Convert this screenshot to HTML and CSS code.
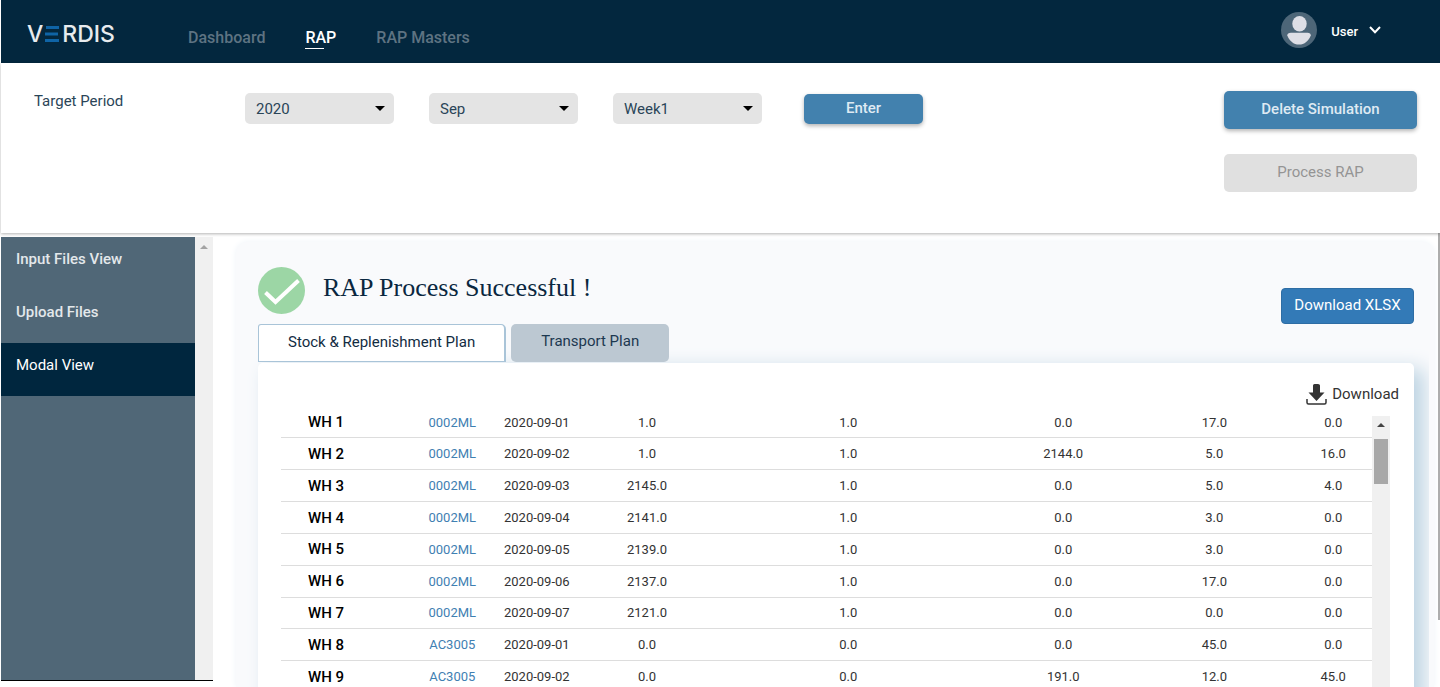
FILE: index.html
```html
<!DOCTYPE html>
<html lang="en">
<head>
    <meta charset="UTF-8">
    <meta name="viewport" content="width=device-width, initial-scale=1.0">
    <title>Verdis - RAP</title>
    <link rel="stylesheet" href="styles.css">
</head>
<body>
    <header class="topbar">
        <a class="logo" href="#" aria-label="Verdis">
            <span>V</span>
            <svg class="logo-bars" width="14" height="16" viewBox="0 0 14 16">
                <path d="M1 1.5h13M0 8h13M0 14.5h14" stroke="#0f64a6" stroke-width="3"/>
            </svg>
            <span>RDIS</span>
        </a>
        <nav class="main-nav">
            <a href="#">Dashboard</a>
            <a href="#" class="active">RAP</a>
            <a href="#">RAP Masters</a>
        </nav>
        <button class="user-menu" type="button">
            <svg width="36" height="36" viewBox="0 0 36 36">
                <circle cx="18" cy="18" r="18" fill="#4d6678"/>
                <ellipse cx="18.5" cy="11.7" rx="7.2" ry="7.8" fill="#dedfe6"/>
                <path d="M6.3 23.5Q6.3 20.8 10 20.8H26.5Q29.8 20.8 29.8 23.5C27.5 29 23.5 32.6 18 32.6S8.5 29 6.3 23.5Z" fill="#dedfe6"/>
            </svg>
            <span>User</span>
            <svg class="chevron" width="12" height="8" viewBox="0 0 12 8">
                <path d="M1 1l5 5.2L11 1" fill="none" stroke="#fff" stroke-width="2"/>
            </svg>
        </button>
    </header>

    <section class="filters">
        <label class="filter-label" for="year">Target Period</label>
        <div class="filter-fields">
            <div class="select"><select id="year" aria-label="Year"><option>2020</option></select></div>
            <div class="select"><select id="month" aria-label="Month"><option>Sep</option></select></div>
            <div class="select"><select id="week" aria-label="Week"><option>Week1</option></select></div>
            <button class="btn btn-enter" type="button">Enter</button>
        </div>
        <div class="filter-actions">
            <button class="btn" type="button">Delete Simulation</button>
            <button class="btn btn-disabled" type="button" disabled>Process RAP</button>
        </div>
    </section>

    <div class="content">
        <aside class="sidebar">
            <nav class="side-nav">
                <a href="#">Input Files View</a>
                <a href="#">Upload Files</a>
                <a href="#" class="active">Modal View</a>
            </nav>
            <div class="side-scroll"><span class="arrow-up"></span></div>
        </aside>

        <main class="panel">
            <div class="results">
                <div class="results-head">
                    <svg width="47" height="47" viewBox="0 0 47 47">
                        <circle cx="23.5" cy="23.5" r="23.5" fill="#9cd6a5"/>
                        <path d="M7.500 25.500l10 9.500L40.500 13.500" fill="none" stroke="#fff" stroke-width="4"/>
                    </svg>
                    <h1>RAP Process Successful !</h1>
                    <button class="btn-xlsx" type="button">Download XLSX</button>
                </div>
                <div class="tabs">
                    <button class="tab active" type="button">Stock &amp; Replenishment Plan</button>
                    <button class="tab" type="button">Transport Plan</button>
                </div>
                <div class="card">
                    <a class="download" href="#">
                        <svg width="21" height="21" viewBox="0 0 21 21">
                            <path d="M7 1.500Q7 0 8.500 0h3.500Q14 0 14 1.500V8.500h4.500L10.500 17L2.500 8.500H7z" fill="#333"/>
                            <path d="M1 15v3.500q0 1.500 1.500 1.500h16q1.500 0 1.500-1.500V15" fill="none" stroke="#333" stroke-width="1.5"/>
                        </svg>
                        Download
                    </a>
                    <div class="table-wrap">
                        <table>
                            <colgroup>
                                <col class="c-wh"><col class="c-code"><col class="c-date"><col class="c-open">
                                <col class="c-min"><col class="c-in"><col class="c-out"><col class="c-end">
                            </colgroup>
                            <tbody>
                                <tr><th>WH 1</th><td><a href="#">0002ML</a></td><td>2020-09-01</td><td>1.0</td><td>1.0</td><td>0.0</td><td>17.0</td><td>0.0</td></tr>
                                <tr><th>WH 2</th><td><a href="#">0002ML</a></td><td>2020-09-02</td><td>1.0</td><td>1.0</td><td>2144.0</td><td>5.0</td><td>16.0</td></tr>
                                <tr><th>WH 3</th><td><a href="#">0002ML</a></td><td>2020-09-03</td><td>2145.0</td><td>1.0</td><td>0.0</td><td>5.0</td><td>4.0</td></tr>
                                <tr><th>WH 4</th><td><a href="#">0002ML</a></td><td>2020-09-04</td><td>2141.0</td><td>1.0</td><td>0.0</td><td>3.0</td><td>0.0</td></tr>
                                <tr><th>WH 5</th><td><a href="#">0002ML</a></td><td>2020-09-05</td><td>2139.0</td><td>1.0</td><td>0.0</td><td>3.0</td><td>0.0</td></tr>
                                <tr><th>WH 6</th><td><a href="#">0002ML</a></td><td>2020-09-06</td><td>2137.0</td><td>1.0</td><td>0.0</td><td>17.0</td><td>0.0</td></tr>
                                <tr><th>WH 7</th><td><a href="#">0002ML</a></td><td>2020-09-07</td><td>2121.0</td><td>1.0</td><td>0.0</td><td>0.0</td><td>0.0</td></tr>
                                <tr><th>WH 8</th><td><a href="#">AC3005</a></td><td>2020-09-01</td><td>0.0</td><td>0.0</td><td>0.0</td><td>45.0</td><td>0.0</td></tr>
                                <tr><th>WH 9</th><td><a href="#">AC3005</a></td><td>2020-09-02</td><td>0.0</td><td>0.0</td><td>191.0</td><td>12.0</td><td>45.0</td></tr>
                            </tbody>
                        </table>
                        <div class="table-scroll">
                            <span class="arrow-up"></span>
                            <span class="thumb"></span>
                        </div>
                    </div>
                </div>
            </div>
        </main>
        <div class="page-scroll"></div>
    </div>
</body>
</html>
```

FILE: styles.css
```css
* {
    box-sizing: border-box;
}

body {
    margin: 0;
    padding-left: 1px;
    height: 100vh;
    display: flex;
    flex-direction: column;
    overflow: hidden;
    background: #fff;
    color: #2a4558;
    font-family: Roboto, Arial, sans-serif;
    font-size: 15px;
}

a {
    text-decoration: none;
}

button,
select {
    font-family: inherit;
    border: none;
}

/* top bar */
.topbar {
    flex: none;
    height: 63px;
    display: flex;
    align-items: center;
    padding: 0 59px 0 26px;
    background: #03273e;
}

.logo {
    display: flex;
    align-items: center;
    width: 161px;
    padding-top: 5px;
    color: #e8ebee;
    font-family: Inter, sans-serif;
    font-size: 23px;
    font-weight: 500;
    line-height: 22px;
}

.logo-bars {
    margin: 0 3px 0 2px;
}

.main-nav {
    flex: 1;
    display: flex;
    gap: 40px;
    padding-top: 12px;
}

.main-nav a {
    color: #5e7382;
    font-size: 16px;
    font-weight: 500;
    line-height: 20px;
}

.main-nav .active {
    color: #fff;
}

.main-nav .active::after {
    content: "";
    display: block;
    width: 19px;
    height: 1px;
    margin-bottom: -1px;
    background: #fff;
}

.user-menu {
    display: flex;
    align-items: center;
    padding: 0;
    margin-bottom: 3px;
    background: none;
    color: #fff;
    font-size: 13px;
    font-weight: 500;
    cursor: pointer;
}

.user-menu span {
    margin: 2px 11px 0 14px;
}

/* filters */
.filters {
    flex: none;
    position: relative;
    z-index: 1;
    display: flex;
    align-items: flex-start;
    height: 170px;
    padding: 28px 23px 0 33px;
    background: #fff;
    box-shadow: 0 1px 3px rgba(0, 0, 0, 0.3);
}

.filter-label {
    width: 211px;
    line-height: 20px;
}

.filter-fields {
    flex: 1;
    display: flex;
    gap: 35px;
    padding-top: 2px;
}

.select {
    position: relative;
    width: 149px;
}

.select::after {
    content: "";
    position: absolute;
    right: 9px;
    top: 13px;
    border: 5px solid transparent;
    border-top-color: #000;
    border-bottom: none;
    pointer-events: none;
}

.select select {
    width: 100%;
    height: 31px;
    padding: 0 11px;
    appearance: none;
    border-radius: 5px;
    background: #e4e4e4;
    color: #2a4558;
    font-size: 15px;
}

.btn {
    height: 38px;
    padding: 0 0 2px;
    border-radius: 5px;
    background: #4281ae;
    color: #dfeaf3;
    font-size: 15px;
    font-weight: 500;
    box-shadow: 0 2px 4px rgba(0, 0, 0, 0.3);
    cursor: pointer;
}

.btn-enter {
    width: 119px;
    height: 30px;
    margin: 1px 0 0 7px;
}

.btn-disabled {
    background: #e0e0e0;
    color: #949494;
    font-weight: 400;
    box-shadow: none;
    cursor: default;
}

.filter-actions {
    display: flex;
    flex-direction: column;
    gap: 25px;
    width: 193px;
}

/* content */
.content {
    flex: 1;
    min-height: 0;
    display: flex;
}

.sidebar {
    flex: none;
    display: flex;
    width: 212px;
    margin: 4px 0 6px;
    border-bottom: 1px solid #000;
}

.side-nav {
    flex: 1;
    background: #506777;
}

.side-nav a {
    display: block;
    height: 53px;
    padding: 12px 15px;
    color: #e3e8eb;
    font-weight: 500;
    line-height: 20px;
}

.side-nav .active {
    background: #00263e;
    color: #fff;
    font-weight: 400;
}

.side-scroll {
    display: flex;
    justify-content: center;
    width: 18px;
    padding-top: 8px;
    background: #f0f0f0;
}

.arrow-up {
    width: 0;
    height: 0;
    border: 4px solid transparent;
    border-top: none;
    border-bottom-color: #a3a3a3;
}

.panel {
    flex: 1;
    min-width: 0;
    margin: 9px 4px 0 23px;
    border-radius: 12px 12px 0 0;
    background: #f9fafc;
    box-shadow: 0 0 6px #eef3f8;
}

.results {
    height: 100%;
    margin-right: 5px;
    padding: 25px 15px 0 22px;
    overflow: hidden;
}

.results-head {
    display: flex;
    height: 57px;
}

.results-head h1 {
    flex: 1;
    margin: 5px 0 0 18px;
    font-family: "Liberation Serif", "Times New Roman", serif;
    font-size: 26px;
    font-weight: 400;
    line-height: 32px;
    color: #0a2740;
}

.btn-xlsx {
    width: 133px;
    height: 36px;
    margin-top: 21px;
    padding: 0 0 2px;
    border: 1px solid #2e6da4;
    border-radius: 4px;
    background: #337ab7;
    color: #fff;
    font-size: 15px;
    cursor: pointer;
}

.tabs {
    display: flex;
    gap: 5px;
}

.tab {
    height: 38px;
    padding: 0 30px 4px;
    border-radius: 5px;
    background: #bcc8d2;
    color: #1c3850;
    font-size: 15px;
    cursor: pointer;
}

.tab.active {
    padding: 0 29px 2px;
    border: 1px solid #a9c4d8;
    border-right-width: 2px;
    border-radius: 3px 5px 0 0;
    background: #fff;
    color: #122c42;
}

.card {
    height: 340px;
    margin-top: 1px;
    padding: 21px 15px 0 23px;
    border-radius: 5px;
    background: #fff;
    box-shadow: 10px 6px 20px #bcd3e2;
}

.download {
    display: flex;
    justify-content: flex-end;
    gap: 5px;
    height: 23px;
    color: #333;
    line-height: 20px;
}

.table-wrap {
    display: flex;
    align-items: flex-start;
    padding-right: 9px;
}

table {
    flex: 1;
    height: 286px;
    table-layout: fixed;
    border-collapse: collapse;
    color: #333;
    font-size: 13px;
}

th,
td {
    padding: 0;
    border-bottom: 1px solid #ddd;
    text-align: center;
}

th {
    padding-left: 27px;
    text-align: left;
    color: #000;
    font-size: 15px;
    font-weight: 500;
}

td a {
    color: #3f80b2;
}

.c-wh { width: 12.8%; }
.c-code { width: 5.8%; }
.c-date { width: 9.7%; }
.c-open { width: 10.5%; }
.c-min { width: 26.4%; }
.c-in { width: 13%; }
.c-out { width: 14.7%; }
.c-end { width: 7.1%; }

.table-scroll {
    display: flex;
    flex-direction: column;
    align-items: center;
    width: 18px;
    height: 290px;
    margin-top: 9px;
    padding-top: 7px;
    background: #f0f0f0;
}

.table-scroll .arrow-up {
    border-bottom-color: #444;
}

.thumb {
    width: 14px;
    height: 45px;
    margin-top: 12px;
    background: #a8a8a8;
}

.page-scroll {
    width: 2px;
    height: 387px;
    background: #adadad;
}
```
